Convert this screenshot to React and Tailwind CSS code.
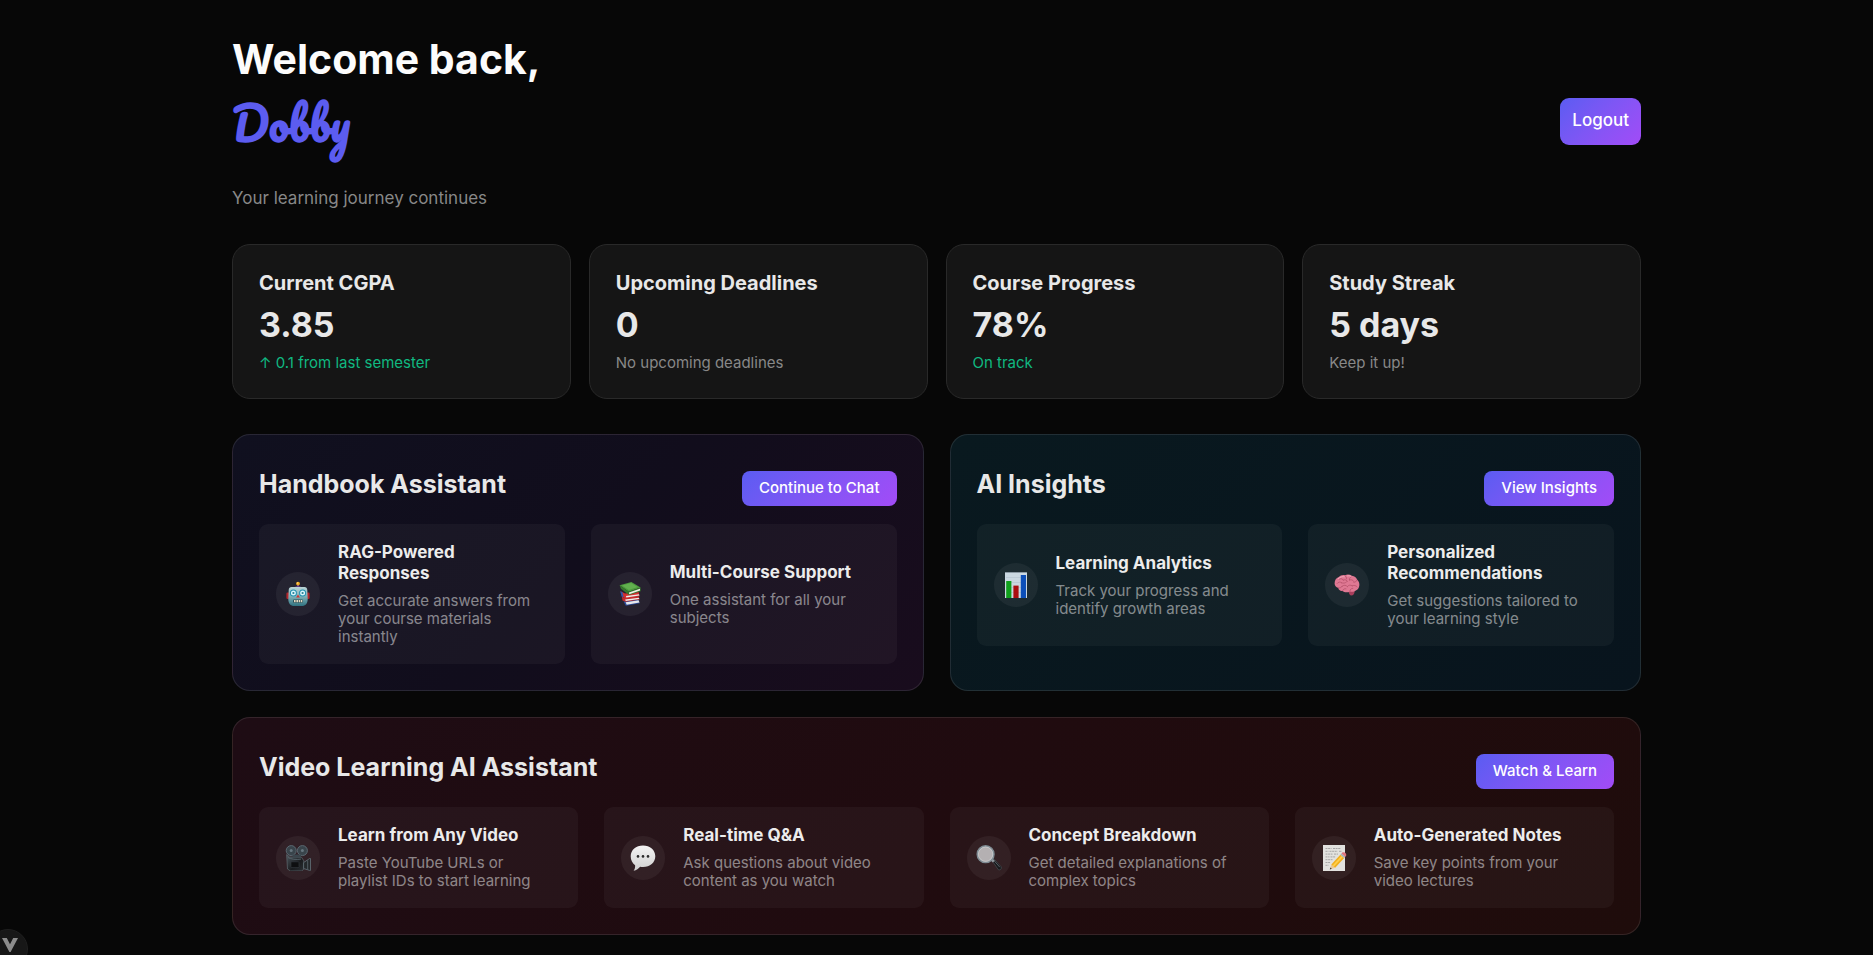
const stats = [
  { title: 'Current CGPA', value: '3.85', note: '↑ 0.1 from last semester', good: true },
  { title: 'Upcoming Deadlines', value: '0', note: 'No upcoming deadlines' },
  { title: 'Course Progress', value: '78%', note: 'On track', good: true },
  { title: 'Study Streak', value: '5 days', note: 'Keep it up!' },
];

function RobotIcon() {
  return (
    <svg viewBox="0 0 26 26" className="h-[26px] w-[26px]" aria-hidden="true">
      <defs>
        <linearGradient id="robotHead" x1="0" y1="0" x2="0" y2="1">
          <stop offset="0" stopColor="#b9d3d6" />
          <stop offset="0.5" stopColor="#7fb0b6" />
          <stop offset="1" stopColor="#2f7280" />
        </linearGradient>
      </defs>
      <rect x="1.4" y="11.5" width="3" height="6.5" rx="1.2" fill="#b3262c" />
      <rect x="21.6" y="11.5" width="3" height="6.5" rx="1.2" fill="#b3262c" />
      <rect x="12.1" y="3.6" width="1.8" height="3" fill="#7a4aa8" />
      <circle cx="13" cy="2.6" r="1.9" fill="#f0a823" />
      <circle cx="12.5" cy="2" r="0.7" fill="#ffd978" />
      <path d="M10.6 5.2h4.8l.6 1.6h-6z" fill="#5a3d86" />
      <path d="M6.6 6h12.8c1.8 0 2.8 1.2 2.9 3l.4 9c0 4.6-2.2 7-6 7H9.3c-3.8 0-6-2.4-6-7l.4-9c.1-1.8 1.1-3 2.9-3z" fill="url(#robotHead)" />
      <circle cx="8.4" cy="12" r="3.5" fill="#1e8fb0" />
      <circle cx="17.6" cy="12" r="3.5" fill="#1e8fb0" />
      <circle cx="8.4" cy="12" r="2.5" fill="#d8f6fb" />
      <circle cx="17.6" cy="12" r="2.5" fill="#d8f6fb" />
      <circle cx="8.4" cy="12" r="1.1" fill="#2b7f96" />
      <circle cx="17.6" cy="12" r="1.1" fill="#2b7f96" />
      <path d="M13 13.4l1.9 3.2h-3.8z" fill="#d2322f" />
      <rect x="8" y="18.4" width="10" height="3.4" rx="1" fill="#2b4f57" />
      <path d="M9 19h1.6v2.2H9zM11.4 19H13v2.2h-1.6zM13.7 19h1.6v2.2h-1.6zM16 19h1.3v2.2H16z" fill="#e3d9c0" />
    </svg>
  );
}

function BooksIcon() {
  return (
    <svg viewBox="0 0 26 26" className="h-[26px] w-[26px]" aria-hidden="true">
      <path d="M6.5 20.6l14.6-2.2 1.6 3.8-13.9 2.6z" fill="#2b4c9b" />
      <path d="M8.6 21.2l13-2 .9 2.3-12.8 2.2z" fill="#e6e6ea" />
      <path d="M4.8 15.6l2.6 1.2 14-1.6 1.3 3.2-14.2 2.4-3-1.4z" fill="#c22a2a" />
      <path d="M8.2 18.6l13.6-1.9.5 1.2-13.6 2z" fill="#ececec" />
      <path d="M3.6 10.2l4.4 2.4 13.6-1.7 1 4.3-14 2.3-3.6-2.2z" fill="#d32f2f" />
      <path d="M3.2 10.2l2.2 1 1.2 5.4-2-1z" fill="#2c55ac" />
      <path d="M9 14.9l13-1.7.3 1.4-13 1.9z" fill="#ededed" />
      <path d="M2.6 4.2L14.4 1l9.2 5.6-11.8 4.2z" fill="#4c9b3d" />
      <path d="M5 4.4l9-2.4 6.6 4-8.7 3z" fill="#62b04f" />
      <path d="M2.6 4.2l9.2 6.6 11.8-4.2v3.6L12 14 4 7.8z" fill="#357a2b" />
      <path d="M12 11.6l11-3.9v1.8l-10.8 3.7z" fill="#efefe8" />
    </svg>
  );
}

function ChartIcon() {
  return (
    <svg viewBox="0 0 26 26" className="h-[26px] w-[26px]" aria-hidden="true">
      <rect x="2" width="22" height="26" fill="#cbd8e1" />
      <path d="M2 0h22v1H2z" fill="#8c99a3" />
      <path d="M3 5.5h20M3 10.5h20M3 15.5h20M3 20.5h20" stroke="#b4c3ce" strokeWidth="0.6" />
      <rect x="3.2" y="9" width="5.2" height="17" fill="#10a01c" />
      <rect x="10.4" y="13.6" width="5.2" height="12.4" fill="#ab0d10" />
      <rect x="17.8" y="3" width="5.2" height="23" fill="#0d4fb8" />
    </svg>
  );
}

function BrainIcon() {
  return (
    <svg viewBox="0 0 26 26" className="h-[26px] w-[26px]" aria-hidden="true">
      <path d="M14.5 18.5c1.6-.6 4.6-.6 6 .4.4 2.4-1.1 4.6-3.4 4.7-1.7-.6-2.4-2.4-2.6-5.1z" fill="#a83f5c" />
      <path d="M.6 11.4c0-3.2 1.6-5.6 4.1-6.4C6.4 3.2 8.8 2.6 11 3.2c2.2-1 5-.8 6.9.6 2.5.2 4.5 1.7 5.3 4 1.7 1.5 2.5 3.8 2.1 6-.3 2.3-1.6 4-3.4 4.6-1.6 1.5-3.9 1.7-5.9 1-2.5 1.4-5.6 1.2-7.6-.4-2.3.2-3.8-1-4.1-2.9C1.9 15 .7 13.5.6 11.4z" fill="#df7893" />
      <path d="M3 11.6c1.3-1.9 3.2-2 4.6-.8M5.2 7.2c1.5-1 3.3-.6 4 .9M9.3 8.1c1.9-.9 3.7-.1 4.1 1.5M11.2 4c1 .7 1.5 1.7 1.3 2.8M17.4 4.8c-1.5.6-2.2 1.8-1.9 3.2M15.5 8c1.8-.7 3.6 0 4.3 1.4M22.8 8.2c-.3 1.4-1.5 2.2-3 2.1M4.6 15.8c1.4.4 2.9-.2 3.5-1.5M8.1 14.3c1.7-1.6 4-1.4 5.2.3M8.7 18.4c.5-1.3 1.9-2 3.3-1.6M13.3 14.6c1.2-1.7 3.4-2 4.9-.8M18.2 13.8c1.6-.8 3.8-.4 4.9 1M16 18.8c.1-1.5 1.2-2.5 2.8-2.5M7.6 10.8c1.8.7 3.7.4 4.9-.8" fill="none" stroke="#a9475f" strokeWidth="0.6" strokeLinecap="round" />
      <path d="M4.4 6.5c1.9-1.6 4-2.2 6-1.7M13.5 3.9c1.3-.4 2.7-.1 3.6.5" fill="none" stroke="#f7b5c3" strokeWidth="0.8" strokeLinecap="round" />
    </svg>
  );
}

function CameraIcon() {
  return (
    <svg viewBox="0 0 26 26" className="h-[26px] w-[26px]" aria-hidden="true">
      <defs>
        <linearGradient id="cameraBody" x1="0" y1="0" x2="1" y2="1">
          <stop offset="0" stopColor="#4c565d" />
          <stop offset="0.6" stopColor="#1a1c1f" />
          <stop offset="1" stopColor="#2c3034" />
        </linearGradient>
      </defs>
      <path d="M1.6 9.6l3 2.4 12 .4 2.2 3.4v8.4L16.6 26H5.5l-3-2z" fill="url(#cameraBody)" stroke="#5d686f" strokeWidth="0.7" />
      <path d="M18.6 17.6l6-4.1h.9v11.9h-.9l-6-1.9z" fill="#24282b" stroke="#65727a" strokeWidth="0.8" />
      <path d="M22.7 15.4v9" stroke="#65727a" strokeWidth="0.7" />
      <circle cx="6.2" cy="5.6" r="5" fill="#39444b" stroke="#5f6d76" strokeWidth="0.9" />
      <circle cx="17.4" cy="5.6" r="5" fill="#39444b" stroke="#5f6d76" strokeWidth="0.9" />
      <path d="M7.5 9.5h8.6v3H7.5z" fill="#3a454c" />
      <circle cx="6.2" cy="5.6" r="1.5" fill="#66757e" />
      <circle cx="17.4" cy="5.6" r="1.5" fill="#66757e" />
      <path d="M3 12.5c3 1.8 8 2.4 13 1.6" stroke="#58656d" strokeWidth="0.9" fill="none" />
      <rect x="6" y="16.8" width="8" height="5.8" rx="0.8" fill="#0e0f11" stroke="#3c444a" strokeWidth="0.5" />
    </svg>
  );
}

function SpeechIcon() {
  return (
    <svg viewBox="0 0 26 26" className="h-[26px] w-[26px]" aria-hidden="true">
      <defs>
        <linearGradient id="speechFill" x1="0" y1="0" x2="0" y2="1">
          <stop offset="0" stopColor="#f4f4f4" />
          <stop offset="1" stopColor="#cfcfcf" />
        </linearGradient>
      </defs>
      <path d="M13 .6c7 0 12.3 4.5 12.3 10.7S20 22.1 13 22.1c-1 0-2-.1-2.9-.3-1.5 1.8-3.6 3.5-6.5 3.9 1.2-1.6 1.7-3.4 1.5-5.5C2.3 18.1.7 15 .7 11.3.7 5.1 6 .6 13 .6z" fill="url(#speechFill)" />
      <circle cx="8" cy="11.4" r="1.3" fill="#2b2b2b" />
      <circle cx="13" cy="11.4" r="1.3" fill="#2b2b2b" />
      <circle cx="18" cy="11.4" r="1.3" fill="#2b2b2b" />
    </svg>
  );
}

function MagnifierIcon() {
  return (
    <svg viewBox="0 0 26 26" className="h-[26px] w-[26px]" aria-hidden="true">
      <path d="M15.8 15.4l2-1.8 7.4 8.2c1 1.6-.9 3.8-2.8 2.9z" fill="#17191b" stroke="#4d555a" strokeWidth="0.6" />
      <path d="M18 15.6l5.8 6.6" stroke="#687178" strokeWidth="0.8" />
      <path d="M14.6 15.2l2-1.8 2.2 2.4-2 1.8z" fill="#939ba0" />
      <circle cx="9.6" cy="9.2" r="8.3" fill="#b4b0b2" stroke="#7f8c94" strokeWidth="1.7" />
      <circle cx="9.6" cy="9.2" r="7.2" fill="none" stroke="#d0d2d4" strokeWidth="0.7" />
    </svg>
  );
}

function NotesIcon() {
  return (
    <svg viewBox="0 0 26 26" className="h-[26px] w-[26px]" aria-hidden="true">
      <rect x="2" width="22" height="26" fill="#e2e2df" />
      <path d="M4.5 3.5h6M12 3.5h8M4.5 6.3h3M8.5 6.3h8M18 6.3h3M4.5 9.1h7M13 9.1h4M4.5 11.9h4M9.5 11.9h5M4.5 14.7h7M4.5 17.5h5M4.5 20.3h3" stroke="#a0a0a0" strokeWidth="0.9" strokeDasharray="2 0.6" />
      <path d="M8.8 24.6l1.5-5.2 3.9 3.3z" fill="#e8c796" />
      <path d="M8.8 24.6l.6-2 1.4 1.2z" fill="#333" />
      <path d="M10.3 19.4l9-9.7 3.9 3.4-9 9.6z" fill="#f2b01e" />
      <path d="M11.6 20.5l9-9.7 1.3 1.2-9 9.6z" fill="#ffd04d" />
      <path d="M19.3 9.7l1.2-1.3 3.9 3.3-1.2 1.4z" fill="#a9b2b7" />
      <path d="M20.5 8.4l.8-.8c1.9-1.2 4.6 1 3.9 3.2l-.8.9z" fill="#e0747d" />
    </svg>
  );
}

const buttonBase =
  'cursor-pointer shrink-0 bg-linear-135 from-[#5a5cf2] to-[#a24bf7] font-medium text-white';

function Feature({ Icon, title, text }) {
  return (
    <article className="flex items-center gap-[18px] rounded-[9px] bg-white/4 py-[18px] pr-6 pl-[17px]">
      <div className="flex size-[44px] shrink-0 items-center justify-center rounded-full bg-white/5">
        <Icon />
      </div>
      <div className="flex flex-col gap-2">
        <h3 className="text-[17px] leading-[21px] font-bold text-[#ececec]">{title}</h3>
        <p className="text-[15px] leading-[18px] text-[#e8e8e8]/55">{text}</p>
      </div>
    </article>
  );
}

function Panel({ title, action, tone, columns, children }) {
  return (
    <section className={`rounded-[18px] border border-white/10 bg-linear-135 p-[26px] ${tone}`}>
      <header className="mb-2 flex h-[55px] items-center justify-between gap-4">
        <h2 className="pb-[10px] text-[25px] leading-[32px] font-bold text-[#e8e8e8]">{title}</h2>
        <button type="button" className={`${buttonBase} h-[35px] rounded-[8px] px-[17px] text-[15px]`}>
          {action}
        </button>
      </header>
      <div className={`grid gap-[26px] ${columns}`}>{children}</div>
    </section>
  );
}

export default function App() {
  return (
    <div className="min-h-screen bg-[#070707] px-6 pt-[33px] pb-5 font-['Inter',sans-serif] text-[#e8e8e8]">
      <main className="mx-auto max-w-[1409px]">
        <header className="mb-[35px] flex items-center justify-between">
          <div>
            <h1 className="font-bold">
              <span className="block text-[41px] leading-[53px] text-[#fcfcfc]">Welcome back,</span>
              <span className="block font-['Pacifico',cursive] text-[44px] leading-[76px] font-bold text-[#5c5cf0]">
                Dobby
              </span>
            </h1>
            <p className="mt-[26px] text-[17px] leading-[21px] text-[#888888]">Your learning journey continues</p>
          </div>
          <button type="button" className={`${buttonBase} h-[47px] rounded-[9px] px-3 text-[17px]`}>
            Logout
          </button>
        </header>

        <div className="mb-[35px] grid grid-cols-2 gap-[18px] lg:grid-cols-4">
          {stats.map((s) => (
            <section key={s.title} className="flex flex-col gap-2 rounded-[18px] border border-[#292929] bg-[#151515] p-[26px]">
              <h2 className="text-[20px] leading-[25px] font-bold">{s.title}</h2>
              <p className="text-[34px] leading-[42px] font-bold">{s.value}</p>
              <p className={`text-[15px] leading-[18px] ${s.good ? 'text-[#10b981]' : 'text-[#888888]'}`}>{s.note}</p>
            </section>
          ))}
        </div>

        <div className="grid gap-[26px] lg:grid-cols-2">
          <Panel title="Handbook Assistant" action="Continue to Chat" tone="from-[#10101f] via-[#110d1c] to-[#190c1d]" columns="grid-cols-2">
            <Feature Icon={RobotIcon} title="RAG-Powered Responses" text="Get accurate answers from your course materials instantly" />
            <Feature Icon={BooksIcon} title="Multi-Course Support" text="One assistant for all your subjects" />
          </Panel>
          <Panel title="AI Insights" action="View Insights" tone="from-[#09191f] to-[#08141d]" columns="grid-cols-2">
            <Feature Icon={ChartIcon} title="Learning Analytics" text="Track your progress and identify growth areas" />
            <Feature Icon={BrainIcon} title="Personalized Recommendations" text="Get suggestions tailored to your learning style" />
          </Panel>
          <div className="lg:col-span-2">
            <Panel title="Video Learning AI Assistant" action="Watch & Learn" tone="from-[#1e0c14] via-[#200b0f] to-[#1f0c0b]" columns="grid-cols-2 lg:grid-cols-4">
              <Feature Icon={CameraIcon} title="Learn from Any Video" text="Paste YouTube URLs or playlist IDs to start learning" />
              <Feature Icon={SpeechIcon} title="Real-time Q&A" text="Ask questions about video content as you watch" />
              <Feature Icon={MagnifierIcon} title="Concept Breakdown" text="Get detailed explanations of complex topics" />
              <Feature Icon={NotesIcon} title="Auto-Generated Notes" text="Save key points from your video lectures" />
            </Panel>
          </div>
        </div>
      </main>

      <div className="fixed -bottom-[14px] -left-3 flex size-10 justify-center rounded-full border border-[#1f1f1f] bg-[#171717] pt-2 pl-1">
        <svg viewBox="0 0 16 14" className="h-[14px] w-4" aria-hidden="true">
          <path d="M0 0h4.8L8 6.2 11.2 0H16L8.6 14H7.4z" fill="#8c8c8c" />
        </svg>
      </div>
    </div>
  );
}
